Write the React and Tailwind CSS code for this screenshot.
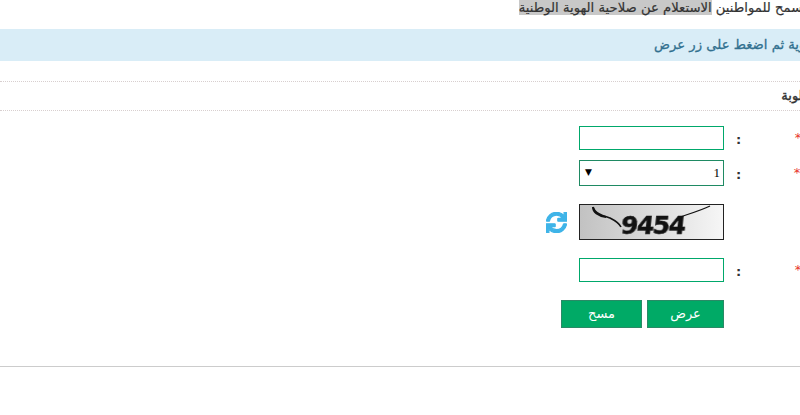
import { FaSync } from 'react-icons/fa';

const Field = ({ label, labelClass, height = 'h-6', children }) => (
    <div className="flex items-center">
        <div className={`w-[176px] shrink-0 text-[13px] text-[#333] whitespace-nowrap ${labelClass}`}>
            {label} <span className="text-[#e8352a]">*</span>
        </div>
        <div className="w-[15px] shrink-0 text-[13px] font-bold text-[#333] text-center pt-1">:</div>
        <div className={`w-[145px] ${height} mr-[7px] shrink-0`}>{children}</div>
    </div>
);

const App = () => {
    return (
        <div className="w-[800px] h-[415px] overflow-hidden bg-white font-['DejaVu_Sans',sans-serif]">
            <div dir="rtl" className="w-[960px] h-full">
                <p className="h-[29px] pr-[87px] text-[13.2px] leading-4 text-[#333] whitespace-nowrap [-webkit-text-stroke:0.2px]">
                    هذه الخدمة تسمح للمواطنين <span className="bg-[#c8c8c8]">الاستعلام عن صلاحية الهوية الوطنية</span>
                </p>

                <div className="h-8 bg-[#d9edf7] flex items-center text-[13.2px] text-[#31708f] whitespace-nowrap pr-[45px] [-webkit-text-stroke:0.3px]">
                    يرجى إدخال رقم الهوية ثم اضغط على زر عرض
                </div>

                <div className="mt-5 h-[30px] border-y border-dotted border-[#d8cfcf] flex items-center text-[13px] text-[#333] whitespace-nowrap pr-[88px] [-webkit-text-stroke:0.4px]">
                    البيانات المطلوبة
                </div>

                <div className="mt-[15px] pr-[38px] flex flex-col">
                    <Field label="رقم الهوية الوطنية" labelClass="pr-[17px]">
                        <input className="w-full h-full border border-[#00a86b] bg-white outline-none" />
                    </Field>

                    <div className="mt-[10px]">
                        <Field label="رقم النسخة" labelClass="pr-[54px]" height="h-[26px]">
                            <div className="relative h-full">
                                <select className="w-full h-full appearance-none border border-[#1f8a63] bg-white pr-[3px] text-[13px] font-['Liberation_Serif',serif] text-black outline-none rounded-none">
                                    <option>1</option>
                                </select>
                                <span className="absolute left-[6px] top-[6px] text-[9px] text-black pointer-events-none">▼</span>
                            </div>
                        </Field>
                    </div>

                    <div className="mt-[18px] flex items-center pr-[176px]">
                        <div className="w-[15px] shrink-0" />
                        <div className="relative w-[145px] h-9 mr-[7px] shrink-0 border border-[#222] bg-gradient-to-r from-[#c2c2c2] to-[#f6f6f6] overflow-hidden flex items-center justify-center" dir="ltr">
                            <svg className="absolute inset-0" width="143" height="34" viewBox="0 0 143 34" fill="none">
                                <path d="M13 2C15 9 24 11 30 13C36 16 39 18 41 22" stroke="#111" strokeWidth="1.6" />
                                <path d="M13 2C13 7 18 11 26 12" stroke="#111" strokeWidth="2" />
                                <path d="M100 12C112 8 122 5 130 1" stroke="#111" strokeWidth="1.2" />
                            </svg>
                            <span className="relative ml-[3px] mt-[6px] text-[25px] leading-none font-bold tracking-[-1.5px] text-[#111] -skew-x-6 blur-[0.4px] [-webkit-text-stroke:0.5px]">9454</span>
                        </div>
                        <FaSync className="mr-[12px] text-[#3fb4e8]" size={21} stroke="currentColor" strokeWidth={30} />
                    </div>

                    <div className="mt-[18px]">
                        <Field label="رمز التحقق المرئي" labelClass="pr-[14px]">
                            <input className="w-full h-full border border-[#00a86b] bg-white outline-none" />
                        </Field>
                    </div>

                    <div className="mt-[18px] flex pr-[198px] gap-[5px]">
                        <button className="w-[77px] h-7 bg-[#00aa66] border border-[#2a8a66] text-white text-[13px]">عرض</button>
                        <button className="w-[81px] h-7 bg-[#00aa66] border border-[#2a8a66] text-white text-[13px]">مسح</button>
                    </div>
                </div>

                <div className="mt-[38px] border-t border-[#cccccc]" />
            </div>
        </div>
    );
};

export default App;
